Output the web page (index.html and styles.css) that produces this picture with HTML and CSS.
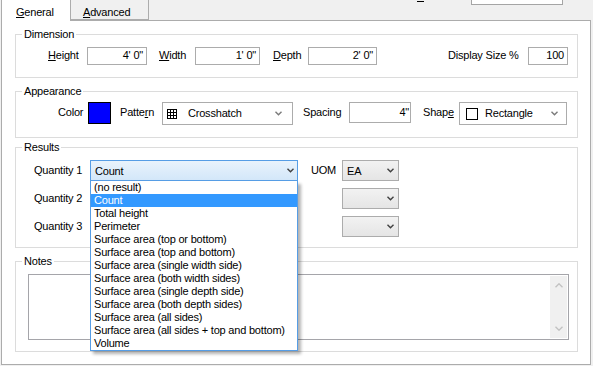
FILE: index.html
```html
<!DOCTYPE html>
<html>
<head>
<meta charset="utf-8">
<link rel="stylesheet" href="styles.css">
</head>
<body>
<div class="tabbar">
  <div class="tab tab-active"><u>G</u>eneral</div>
  <div class="tab tab-idle"><u>A</u>dvanced</div>
  <div class="top-right">
    <span class="cut-underline"></span>
    <span class="cut-box"></span>
  </div>
</div>
<div class="panel">
  <fieldset class="group g-dim">
    <legend>Dimension</legend>
    <div class="row">
      <span class="lbl lbl-dim l-height"><u>H</u>eight</span>
      <div class="field f-height">4' 0"</div>
      <span class="lbl lbl-dim l-width"><u>W</u>idth</span>
      <div class="field f-width">1' 0"</div>
      <span class="lbl lbl-dim l-depth"><u>D</u>epth</span>
      <div class="field f-depth">2' 0"</div>
      <span class="lbl lbl-dim l-size">Display Size %</span>
      <div class="field f-size">100</div>
    </div>
  </fieldset>

  <fieldset class="group g-app">
    <legend>Appearance</legend>
    <div class="row">
      <span class="lbl lbl-app l-color">Color</span>
      <div class="swatch"></div>
      <span class="lbl lbl-app l-pattern">Patte<u>r</u>n</span>
      <div class="combo combo-white c-pattern">
        <svg class="hatch" width="10" height="10" viewBox="0 0 10 10"><path d="M0.5 0V10M3.5 0V10M6.5 0V10M9.5 0V10M0 0.5H10M0 3.5H10M0 6.5H10M0 9.5H10" stroke="#000" stroke-width="1" fill="none"/></svg>
        <span class="combo-text t-pattern">Crosshatch</span>
        <svg class="chev chev-light" width="7" height="5" viewBox="0 0 7 5"><path d="M0.5 0.8 3.5 3.8 6.5 0.8" fill="none" stroke="currentColor" stroke-width="1.4"/></svg>
      </div>
      <span class="lbl lbl-app l-spacing">Spacing</span>
      <div class="field f-spacing">4"</div>
      <span class="lbl lbl-app l-shape">Shap<u>e</u></span>
      <div class="combo combo-white c-shape">
        <span class="shape-icon"></span>
        <span class="combo-text t-shape">Rectangle</span>
        <svg class="chev chev-light" width="7" height="5" viewBox="0 0 7 5"><path d="M0.5 0.8 3.5 3.8 6.5 0.8" fill="none" stroke="currentColor" stroke-width="1.4"/></svg>
      </div>
    </div>
  </fieldset>

  <fieldset class="group g-res">
    <legend>Results</legend>
    <div class="row res-row">
      <span class="lbl lbl-res">Quantity 1</span>
      <div class="combo-wrap">
        <div class="combo combo-open c-qty">
          <span class="combo-text t-qty">Count</span>
          <svg class="chev chev-dark" width="7" height="5" viewBox="0 0 7 5"><path d="M0.5 0.8 3.5 3.8 6.5 0.8" fill="none" stroke="currentColor" stroke-width="1.4"/></svg>
        </div>
        <ul class="droplist">
          <li>(no result)</li>
          <li class="sel">Count</li>
          <li>Total height</li>
          <li>Perimeter</li>
          <li>Surface area (top or bottom)</li>
          <li>Surface area (top and bottom)</li>
          <li>Surface area (single width side)</li>
          <li>Surface area (both width sides)</li>
          <li>Surface area (single depth side)</li>
          <li>Surface area (both depth sides)</li>
          <li>Surface area (all sides)</li>
          <li>Surface area (all sides + top and bottom)</li>
          <li>Volume</li>
        </ul>
      </div>
      <span class="lbl lbl-res l-uom">UOM</span>
      <div class="combo combo-gray c-uom">
        <span class="combo-text t-uom">EA</span>
        <svg class="chev chev-dark" width="7" height="5" viewBox="0 0 7 5"><path d="M0.5 0.8 3.5 3.8 6.5 0.8" fill="none" stroke="currentColor" stroke-width="1.4"/></svg>
      </div>
    </div>
    <div class="row res-row">
      <span class="lbl lbl-res">Quantity 2</span>
      <div class="combo combo-gray c-qty"></div>
      <span class="lbl lbl-res l-uom"></span>
      <div class="combo combo-gray c-uom">
        <span class="combo-text t-uom"></span>
        <svg class="chev chev-dark" width="7" height="5" viewBox="0 0 7 5"><path d="M0.5 0.8 3.5 3.8 6.5 0.8" fill="none" stroke="currentColor" stroke-width="1.4"/></svg>
      </div>
    </div>
    <div class="row res-row">
      <span class="lbl lbl-res">Quantity 3</span>
      <div class="combo combo-gray c-qty"></div>
      <span class="lbl lbl-res l-uom"></span>
      <div class="combo combo-gray c-uom">
        <span class="combo-text t-uom"></span>
        <svg class="chev chev-dark" width="7" height="5" viewBox="0 0 7 5"><path d="M0.5 0.8 3.5 3.8 6.5 0.8" fill="none" stroke="currentColor" stroke-width="1.4"/></svg>
      </div>
    </div>
  </fieldset>

  <fieldset class="group g-notes">
    <legend>Notes</legend>
    <div class="notes-box">
      <div class="scrollbar">
        <svg width="8" height="5" viewBox="0 0 8 5"><path d="M0.5 4.2 4 0.8 7.5 4.2" fill="none" stroke="#c2c2c2" stroke-width="1.4"/></svg>
        <svg width="8" height="5" viewBox="0 0 8 5"><path d="M0.5 0.8 4 4.2 7.5 0.8" fill="none" stroke="#c2c2c2" stroke-width="1.4"/></svg>
      </div>
    </div>
  </fieldset>
</div>
</body>
</html>
```

FILE: styles.css
```css
* { box-sizing: border-box; }

html, body {
  margin: 0;
  padding: 0;
}

body {
  width: 593px;
  height: 366px;
  overflow: hidden;
  background: #f0f0f0;
  font-family: "Liberation Sans", Arial, sans-serif;
  font-size: 11px;
  letter-spacing: -0.2px;
  color: #000;
}

u {
  text-decoration: underline;
  text-underline-offset: 1px;
}

/* ---------- tab bar ---------- */
.tabbar {
  display: flex;
  align-items: flex-start;
  height: 20px;
}

.tab {
  margin-top: -2px;
  border-top: 1px solid #acacac;
  padding-top: 7px;
  line-height: 13px;
  white-space: nowrap;
}

.tab-active {
  position: relative;
  z-index: 2;
  margin-left: 1px;
  width: 70px;
  height: 23px;
  background: #fff;
  border-left: 1px solid #acacac;
  border-right: 1px solid #acacac;
  padding-left: 14px;
}

.tab-idle {
  width: 78px;
  height: 22px;
  background: #f0f0f0;
  border-right: 1px solid #acacac;
  border-bottom: 1px solid #acacac;
  padding-left: 12px;
}

.top-right {
  display: flex;
  align-items: flex-start;
  margin-left: auto;
  margin-right: 30px;
}

.cut-underline {
  display: block;
  width: 7px;
  height: 1px;
  margin-top: 1px;
  background: #000;
}

.cut-box {
  display: block;
  width: 92px;
  height: 9px;
  margin-top: -4px;
  margin-left: 47px;
  background: #fff;
  border: 1px solid #a5a5a5;
}

/* ---------- panel ---------- */
.panel {
  margin-left: 1px;
  width: 590px;
  background: #fff;
  border: 1px solid #acacac;
  padding: 7px 12px 12px 13px;
}

.group {
  margin: 0;
  padding: 0;
  min-width: 0;
  border: 1px solid #dcdcdc;
}

.group legend {
  margin-left: 6px;
  padding: 0 2px;
  line-height: 13px;
}

.g-dim   { padding: 6px 0 12px; }
.g-app   { margin-top: 7px; padding: 4px 0 12px; }
.g-res   { margin-top: 3px; padding: 6px 0 10px; }
.g-notes { margin-top: 7px; padding: 6px 0 11px; }

.row {
  display: flex;
  align-items: flex-start;
}

.lbl {
  display: block;
  flex: none;
  white-space: nowrap;
}

/* Dimension row */
.lbl-dim { line-height: 16px; }
.l-height { margin-left: 32px; width: 39px; }
.l-width  { margin-left: 12px; width: 36px; }
.l-depth  { margin-left: 13px; width: 35px; }
.l-size   { margin-left: 71px; width: 80px; }

.field {
  flex: none;
  height: 18px;
  border: 1px solid #acacac;
  background: #fff;
  text-align: right;
  padding-right: 3px;
  line-height: 14px;
  white-space: nowrap;
}

.f-height { width: 60px; }
.f-width  { width: 65px; }
.f-depth  { width: 69px; }
.f-size   { width: 40px; }

/* Appearance row */
.lbl-app { line-height: 21px; }
.l-color   { margin-left: 42px; width: 30px; }
.l-pattern { margin-left: 9px; width: 42px; }
.l-spacing { margin-left: 10px; width: 46px; }
.l-shape   { margin-left: 12px; width: 36px; }

.swatch {
  flex: none;
  width: 23px;
  height: 22px;
  background: #0000ff;
  border: 1px solid #000;
}

.f-spacing {
  width: 62px;
  height: 21px;
  line-height: 18px;
  padding-right: 1px;
}

.combo {
  flex: none;
  display: flex;
  align-items: center;
  border: 1px solid #acacac;
  white-space: nowrap;
}

.combo-white {
  height: 23px;
  background: #fff;
  padding-bottom: 1px;
}

.combo-text { flex: 1; }

.chev { flex: none; display: block; }
.chev-light { color: #7a7a7a; }
.chev-dark  { color: #404040; }

.c-pattern { width: 131px; padding-left: 4px; padding-right: 10px; }
.hatch { flex: none; display: block; margin-top: 1px; }
.t-pattern { margin-left: 11px; }

.c-shape { width: 108px; padding-left: 6px; padding-right: 8px; }
.shape-icon {
  flex: none;
  display: block;
  width: 12px;
  height: 12px;
  border: 1px solid #000;
  background: #fff;
  margin-top: 1px;
}
.t-shape { margin-left: 7px; }

/* Results */
.res-row + .res-row { margin-top: 7px; }
.lbl-res { line-height: 21px; margin-left: 18px; width: 56px; }
.lbl-res.l-uom { margin-left: 13px; width: 31px; }

.combo-wrap {
  position: relative;
  flex: none;
  width: 208px;
}

.c-qty {
  width: 208px;
  height: 21px;
}

.combo-open {
  border-color: #569de5;
  background: linear-gradient(#e9f3fc, #d3e7f9);
  padding-left: 4px;
  padding-right: 3px;
}

.combo-gray {
  background: linear-gradient(#f2f2f2, #e5e5e5);
}

.c-uom {
  width: 57px;
  height: 21px;
  padding-left: 4px;
  padding-right: 4px;
}

.droplist {
  position: absolute;
  z-index: 10;
  top: 100%;
  left: 0;
  width: 208px;
  margin: 0;
  padding: 0;
  list-style: none;
  background: #fff;
  border: 1px solid #569de5;
  border-top: 0;
  box-shadow: 3px 3px 3px rgba(0, 0, 0, 0.3);
}

.droplist li {
  height: 13px;
  line-height: 13px;
  padding-left: 3px;
  white-space: nowrap;
}

.droplist li.sel {
  background: #3399ff;
  color: #fff;
}

/* Notes */
.notes-box {
  display: flex;
  justify-content: flex-end;
  height: 66px;
  margin: 0 8px 0 12px;
  background: #fff;
  border: 1px solid #a5a5aa;
}

.scrollbar {
  width: 17px;
  margin: 1px;
  background: #f0f0f0;
  display: flex;
  flex-direction: column;
  justify-content: space-between;
  align-items: center;
  padding: 7px 0 7px;
}

.scrollbar svg { display: block; }
```
